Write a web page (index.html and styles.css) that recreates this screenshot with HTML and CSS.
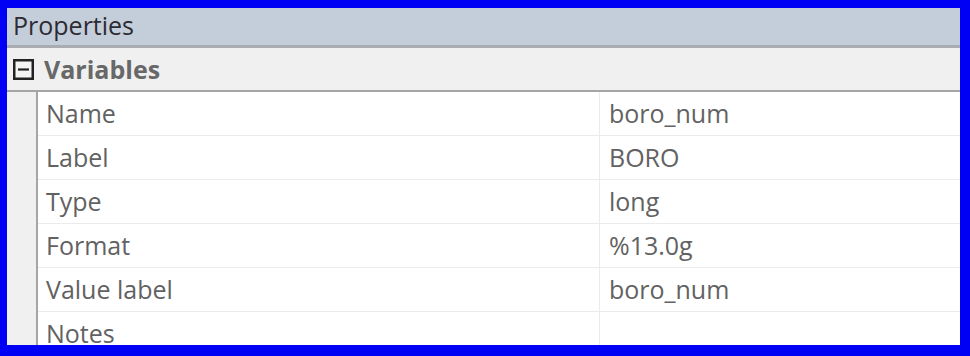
FILE: index.html
```html
<!DOCTYPE html>
<html lang="en">
<head>
  <meta charset="UTF-8">
  <title>Properties</title>
  <link rel="stylesheet" href="styles.css">
</head>
<body>
  <div class="panel">
    <!-- Title bar -->
    <div class="panel-title">Properties</div>

    <!-- Group header -->
    <div class="group-header">
      <span class="toggle">
        <svg viewBox="0 0 21 21" width="21" height="21">
          <rect x="1.25" y="1.25" width="18.5" height="18.5" fill="#f4f4f4" stroke="#222" stroke-width="2.5"/>
          <line x1="5" y1="10.5" x2="16" y2="10.5" stroke="#222" stroke-width="2.2"/>
        </svg>
      </span>
      <span class="group-name">Variables</span>
    </div>

    <!-- Property rows -->
    <div class="group-body">
      <div class="grid">
        <div class="row"><div class="cell key">Name</div><div class="cell val">boro_num</div></div>
        <div class="row"><div class="cell key">Label</div><div class="cell val">BORO</div></div>
        <div class="row"><div class="cell key">Type</div><div class="cell val">long</div></div>
        <div class="row"><div class="cell key">Format</div><div class="cell val">%13.0g</div></div>
        <div class="row"><div class="cell key">Value label</div><div class="cell val">boro_num</div></div>
        <div class="row"><div class="cell key">Notes</div><div class="cell val"></div></div>
      </div>
    </div>
  </div>
</body>
</html>
```

FILE: styles.css
```css
/* Base */
:root {
  --frame: #0000f5;
  --title-bg: #c3ceda;
  --group-bg: #f0f0f0;
  --text: #626262;
  --grid-line: #ebebeb;
}

* {
  margin: 0;
  padding: 0;
  box-sizing: border-box;
}

html, body {
  height: 100%;
}

body {
  background-color: var(--frame);
  padding: 8px 10px 11px 7px;
  font-family: "Open Sans", "Noto Sans", sans-serif;
  overflow: hidden;
}

.panel {
  height: 100%;
  background-color: var(--group-bg);
  display: flex;
  flex-direction: column;
  overflow: hidden;
}

/* Title bar */
.panel-title {
  flex-shrink: 0;
  height: 40px;
  background-color: var(--title-bg);
  border-bottom: 3px solid #a9adb2;
  padding-left: 6px;
  font-size: 25px;
  line-height: 34px;
  color: #2e2a33;
}

/* Group header */
.group-header {
  flex-shrink: 0;
  height: 44px;
  display: flex;
  align-items: center;
  border-bottom: 2px solid #a5a5a5;
}

.toggle {
  width: 30px;
  display: flex;
  justify-content: center;
  padding-left: 3px;
  padding-top: 1px;
}

.group-name {
  margin-left: 7px;
  font-size: 25px;
  font-weight: 700;
  color: #686868;
}

/* Grid */
.group-body {
  flex: 1;
  min-height: 0;
  padding-left: 29px;
  display: flex;
}

.grid {
  flex: 1;
  background-color: #fff;
  border-left: 2px solid #a5a5a5;
  overflow: hidden;
}

.row {
  display: flex;
  height: 44px;
  border-bottom: 1px solid var(--grid-line);
}

.cell {
  font-size: 25px;
  line-height: 43px;
  color: var(--text);
}

.key {
  width: 562px;
  padding-left: 8px;
  border-right: 1px solid var(--grid-line);
}

.val {
  flex: 1;
  padding-left: 9px;
}
```
